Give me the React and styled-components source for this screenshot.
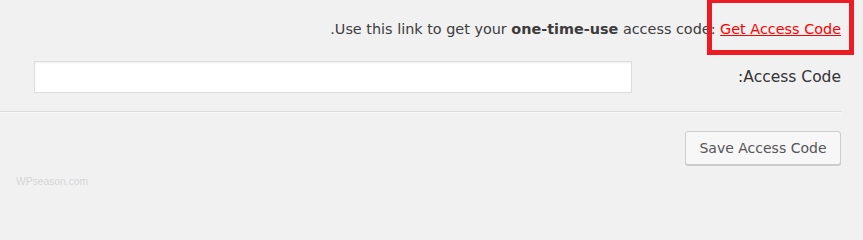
import React from "react";
import styled, { createGlobalStyle } from "styled-components";

const Global = createGlobalStyle`
  html, body { margin: 0; padding: 0; background: #f1f1f1; }
  body { font-family: "DejaVu Sans", Verdana, sans-serif; color: #444; }
`;

const Page = styled.div`
  direction: rtl;
  width: 863px;
  height: 200px;
  box-sizing: border-box;
  padding: 0 22px 0 0;
  display: flex;
  flex-direction: column;
  overflow: hidden;
`;

const Notice = styled.p`
  margin: 0;
  padding-top: 19px;
  height: 36px;
  font-size: 14.4px;
  line-height: 20px;
  color: #3c3c3c;
  white-space: nowrap;
`;

const Marked = styled.span`
  position: relative;
  &::after {
    content: "";
    position: absolute;
    top: -23px;
    bottom: -18px;
    left: -13px;
    right: -13px;
    border: 5px solid #ed1c24;
    pointer-events: none;
  }
`;

const Link = styled.a`
  color: #ff0000;
  text-decoration: underline;
`;

const FieldRow = styled.div`
  display: flex;
  align-items: center;
  justify-content: space-between;
  padding-left: 34px;
  margin-top: 6px;
  height: 32px;
`;

const Label = styled.label`
  font-size: 15.5px;
  color: #333;
`;

const Input = styled.input`
  width: 598px;
  height: 32px;
  box-sizing: border-box;
  border: 1px solid #ddd;
  background: #fff;
  box-shadow: inset 0 1px 2px rgba(0, 0, 0, 0.07);
  outline: none;
  padding: 3px 5px;
`;

const Divider = styled.hr`
  margin: 18px 0 0 0;
  border: 0;
  border-top: 1px solid #dcdcdc;
  border-bottom: 1px solid #fafafa;
`;

const Actions = styled.div`
  display: flex;
  margin-top: 18px;
`;

const Button = styled.button`
  font-family: "DejaVu Sans", Verdana, sans-serif;
  font-size: 14px;
  color: #555;
  background: #f7f7f7;
  border: 1px solid #ccc;
  border-radius: 3px;
  box-shadow: 0 1px 0 #ccc;
  height: 34px;
  width: 156px;
  padding: 0 10px;
  cursor: pointer;
`;

const Watermark = styled.div`
  direction: ltr;
  margin-top: 11px;
  padding-left: 16px;
  font-family: "Liberation Sans", Arial, sans-serif;
  font-size: 10.3px;
  color: #d6d6d6;
`;

export default function App() {
  return (
    <>
      <Global />
      <Page>
        <Notice>
          Use this link to get your <b>one-time-use</b> access code:{" "}
          <Marked>
            <Link href="#">Get Access Code</Link>
          </Marked>
          .
        </Notice>
        <FieldRow>
          <Label htmlFor="code">Access Code:</Label>
          <Input id="code" type="text" />
        </FieldRow>
        <Divider />
        <Actions>
          <Button type="button">Save Access Code</Button>
        </Actions>
        <Watermark>WPseason.com</Watermark>
      </Page>
    </>
  );
}
